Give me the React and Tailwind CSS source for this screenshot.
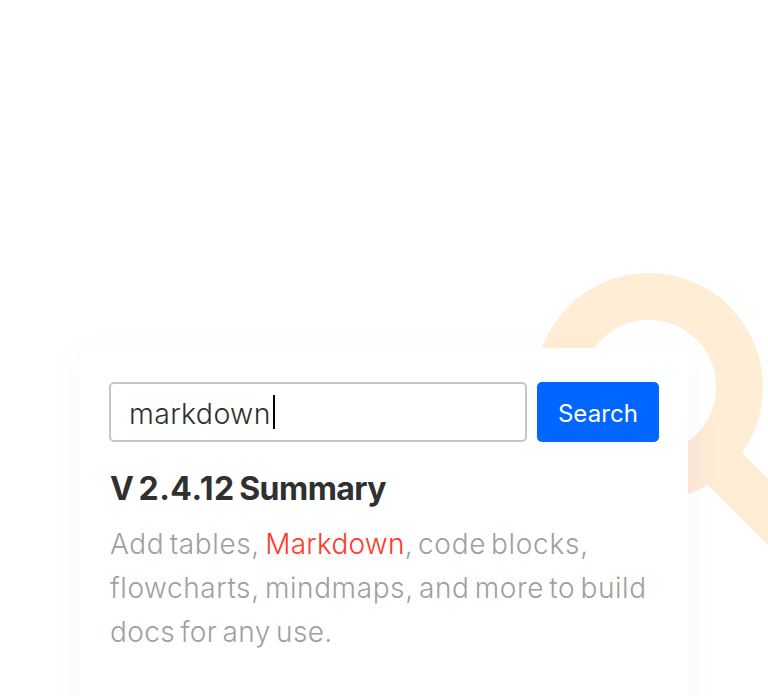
export default function App() {
  return (
    <main className="relative flex h-[696px] w-[768px] overflow-hidden bg-white pl-20 pt-[348px] font-['Inter','Liberation_Sans',sans-serif]">
      <svg className="absolute left-0 top-0" width="768" height="696" viewBox="0 0 768 696" fill="none" aria-hidden="true">
        <defs>
          <linearGradient id="edgeShade" x1="688" y1="0" x2="722" y2="0" gradientUnits="userSpaceOnUse">
            <stop stopColor="#fee8d8" />
            <stop offset="0.4" stopColor="#ffead7" />
            <stop offset="1" stopColor="#ffedd6" />
          </linearGradient>
        </defs>
        <circle cx="649" cy="387" r="90.5" stroke="#ffedd6" strokeWidth="47" />
        <path d="M742 453L768 479V545L708 485Z" fill="#ffedd6" />
        <path d="M690 470L725 436L742 453L708 485Z" fill="#ffedd6" />
        <path d="M688 441.3A67 67 0 0 0 706 422L730 422V464L708 485A114 114 0 0 1 688 494Z" fill="url(#edgeShade)" />
      </svg>

      <section className="relative h-[420px] w-[608px] shrink-0 rounded-[10px] bg-white pl-[29px] pt-[34px] shadow-[0_10px_32px_14px_rgba(0,0,0,0.017)]">
        <div className="flex gap-2.5">
          <div className="flex h-[60px] w-[418px] items-center rounded-[5px] border-2 border-[#c6c6c6] pl-[18px]">
            <span className="w-36 whitespace-nowrap pt-[3px] text-[28.5px] font-light leading-[60px] tracking-[0.35px] text-[#303030]">markdown</span>
            <span className="-mt-px h-[34px] w-0.5 bg-black" />
          </div>
          <button className="h-[60px] w-[122px] rounded-[5px] bg-[#0066ff] pt-1 text-2xl tracking-[0.1px] text-white">Search</button>
        </div>
        <h1 className="mt-[26px] whitespace-nowrap pl-px text-[32px] font-bold leading-[42px] text-[#303030] [word-spacing:-3px]">
          V <span className="tracking-[0.5px]">2.4.12</span> <span className="tracking-[-0.55px]">Summary</span>
        </h1>
        <p className="mt-3 whitespace-nowrap pl-px text-[28px] font-light leading-[44px] text-[#a0a0a0] [word-spacing:-3px]">
          <span className="block tracking-[0.6px]">Add tables, <span className="tracking-[0.25px] text-[#ff3b2b]">Markdown</span><span className="tracking-[0.75px] [word-spacing:-4px]">, code blocks,</span></span>
          <span className="block tracking-[0.6px] [word-spacing:-3.2px]">flowcharts, mindmaps, and more to build</span>
          <span className="block tracking-[0.4px]">docs for any use.</span>
        </p>
      </section>
    </main>
  )
}
